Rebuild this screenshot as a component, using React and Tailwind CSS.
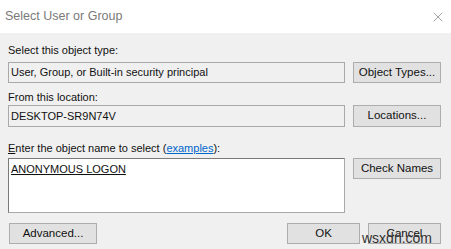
import { X } from 'lucide-react'

const font = { fontFamily: '"Liberation Sans", Arial, sans-serif' }

function WinButton({ children, className = '' }) {
  return (
    <button className={`h-[21px] bg-[#e1e1e1] border border-[#adadad] text-[11.5px] text-[#111] flex items-center justify-center shrink-0 ${className}`}>
      {children}
    </button>
  )
}

export default function App() {
  return (
    <div className="w-[451px] h-[249px] bg-[#f0f0f0] flex flex-col relative overflow-hidden text-[11px] text-[#111]" style={font}>
      {/* title bar */}
      <div className="h-[33px] bg-white flex items-center justify-between pl-[5px] pr-[5px] shrink-0">
        <span className="text-[12.5px] text-[#7a7a7a]">Select User or Group</span>
        <X size={16} strokeWidth={1} className="text-[#777]" />
      </div>

      <div className="flex flex-col px-[8px]">
        <div className="mt-[10px] h-[14px] leading-[14px]">Select this object type:</div>
        <div className="mt-[5px] flex">
          <div className="w-[337px] h-[21px] border border-[#a9a9a9] bg-[#f0f0f0] flex items-center pl-[2px]">User, Group, or Built-in security principal</div>
          <WinButton className="ml-[8px] w-[88px]">Object Types...</WinButton>
        </div>

        <div className="mt-[7px] h-[14px] leading-[14px]">From this location:</div>
        <div className="mt-[1px] flex">
          <div className="w-[337px] h-[22px] border border-[#a9a9a9] bg-[#f0f0f0] flex items-center pl-[2px]">DESKTOP-SR9N74V</div>
          <WinButton className="ml-[8px] w-[88px] h-[22px]">Locations...</WinButton>
        </div>

        <div className="mt-[14px] h-[14px] leading-[14px]">
          <span className="underline">E</span>nter the object name to select (<span className="text-[#0066cc] underline">examples</span>):
        </div>
        <div className="mt-[3px] flex">
          <div className="w-[337px] h-[55px] border border-[#a9a9a9] border-t-[#7a7a7a] border-l-[#7a7a7a] bg-white pl-[2px] pt-[2px]">
            <span className="underline">ANONYMOUS LOGON</span>
          </div>
          <WinButton className="ml-[8px] w-[88px]">Check Names</WinButton>
        </div>

        <div className="mt-[10px] flex items-center">
          <WinButton className="ml-[1px] w-[88px]">Advanced...</WinButton>
          <div className="flex-1" />
          <WinButton className="w-[73px]">OK</WinButton>
          <WinButton className="ml-[8px] w-[73px] mr-[2px]">Cancel</WinButton>
        </div>
      </div>

      <div className="absolute left-[362px] top-[231px] text-[14px] text-[#333] leading-none">wsxdn.com</div>
    </div>
  )
}
